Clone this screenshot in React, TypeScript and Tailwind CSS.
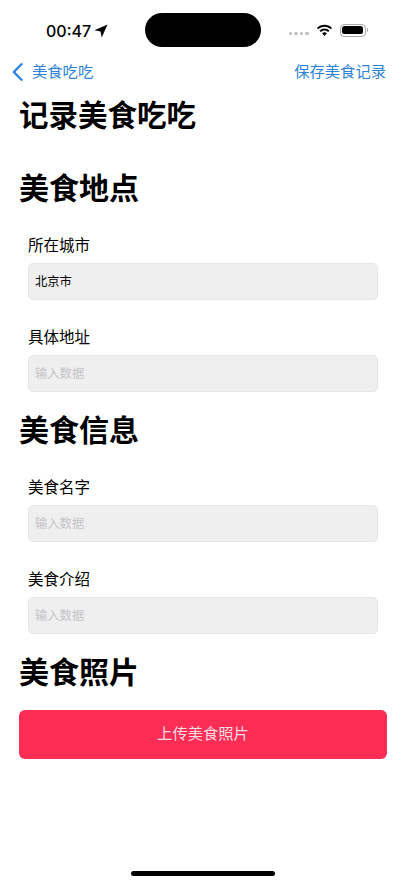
const font = { fontFamily: '"Inter", "Noto Sans CJK SC", sans-serif' }

function StatusBar() {
  return (
    <div className="relative flex h-[60px] items-start justify-between pl-[46px] pr-[38px] pt-[20px]">
      <div className="flex h-[22px] items-center gap-[3px] text-[16px] font-medium leading-[22px] text-black">
        <span>00:47</span>
        <svg width="14" height="14" viewBox="0 0 13 13">
          <path d="M12.6 0.4 L0.4 5.9 L6.1 6.9 L7.1 12.6 Z" fill="#000" />
        </svg>
      </div>
      <div className="absolute left-[145px] top-[13px] h-[34px] w-[116px] rounded-full bg-black" />
      <div className="flex h-[22px] items-center">
        <div className="mr-[7px] mt-[5px] flex gap-[2px]">
          <span className="h-[3px] w-[3.5px] rounded-[1px] bg-[#c4c4c4]" />
          <span className="h-[3px] w-[3.5px] rounded-[1px] bg-[#c4c4c4]" />
          <span className="h-[3px] w-[3.5px] rounded-[1px] bg-[#c4c4c4]" />
          <span className="h-[3px] w-[3.5px] rounded-[1px] bg-[#c4c4c4]" />
        </div>
        <svg width="17" height="13" viewBox="0 0 18 13" className="mr-[7px] -mt-[2px]">
          <path d="M9 2.6c2.6 0 4.9 1 6.6 2.7l1.4-1.5C14.9 1.7 12.1.4 9 .4S3.100 1.700 1 3.800l1.400 1.500C4.100 3.600 6.400 2.600 9 2.600z" fill="#000" />
          <path d="M9 6.500c1.500 0 2.900.6 3.900 1.600l1.400-1.500C12.900 5.200 11 4.300 9 4.300s-3.900.9-5.300 2.300l1.400 1.500C6.100 7.100 7.500 6.500 9 6.500z" fill="#000" />
          <path d="M9 8.300c-1 0-1.800.4-2.500 1L9 12.400l2.500-3.100c-.7-.6-1.500-1-2.500-1z" fill="#000" />
        </svg>
        <div className="-mt-[2px] flex items-center">
          <div className="h-[13px] w-[26px] rounded-[4px] border border-[#a8a8a8] p-[1.5px]">
            <div className="h-full w-full rounded-[2.5px] bg-black" />
          </div>
          <div className="ml-[1px] h-[4px] w-[1.5px] rounded-r-sm bg-[#a8a8a8]" />
        </div>
      </div>
    </div>
  )
}

function Field({ label, value, className }: { label: string; value?: string; className?: string }) {
  return (
    <div className={className}>
      <div className="text-[15.5px] leading-[22px] text-black">{label}</div>
      <div className="mt-[6px] mr-[9px] flex h-[37px] items-center rounded-[5px] border border-[#e6e6e8] bg-[#efeff0] px-[6px] pt-[2px] text-[12.3px]">
        {value ? <span className="text-black">{value}</span> : <span className="text-[#c4c4c6]">输入数据</span>}
      </div>
    </div>
  )
}

export default function App() {
  return (
    <div className="h-[883px] w-[406px] overflow-hidden bg-white" style={font}>
      <StatusBar />
      <div className="flex h-[24px] items-center justify-between pl-[12px] pr-[20px] text-[15.3px] text-[#2b82d9]">
        <div className="flex items-center gap-[9px]">
          <svg width="11" height="18" viewBox="0 0 11 18" fill="none">
            <path d="M9.500 1.200 L1.800 9 L9.500 16.800" stroke="#2b7fd8" strokeWidth="2.300" strokeLinecap="round" strokeLinejoin="round" />
          </svg>
          <span>美食吃吃</span>
        </div>
        <span>保存美食记录</span>
      </div>
      <div className="px-[19px]">
        <h1 className="mt-[13px] text-[29.5px] font-bold leading-[36px] text-black">记录美食吃吃</h1>
        <h2 className="mt-[37px] text-[30px] font-bold leading-[36px] text-black">美食地点</h2>
        <div className="pl-[9px]">
          <Field label="所在城市" value="北京市" className="mt-[29px]" />
          <Field label="具体地址" className="mt-[27px]" />
        </div>
        <h2 className="mt-[20px] text-[30px] font-bold leading-[36px] text-black">美食信息</h2>
        <div className="pl-[9px]">
          <Field label="美食名字" className="mt-[29px]" />
          <Field label="美食介绍" className="mt-[27px]" />
        </div>
        <h2 className="mt-[20px] text-[30px] font-bold leading-[36px] text-black">美食照片</h2>
        <button className="mt-[20px] flex h-[49px] w-full items-center justify-center rounded-[6px] bg-[#fe2d55] text-[15.3px] text-[#fbdde3]">
          上传美食照片
        </button>
      </div>
      <div className="mx-auto mt-[112px] h-[5px] w-[144px] rounded-full bg-black" />
    </div>
  )
}
